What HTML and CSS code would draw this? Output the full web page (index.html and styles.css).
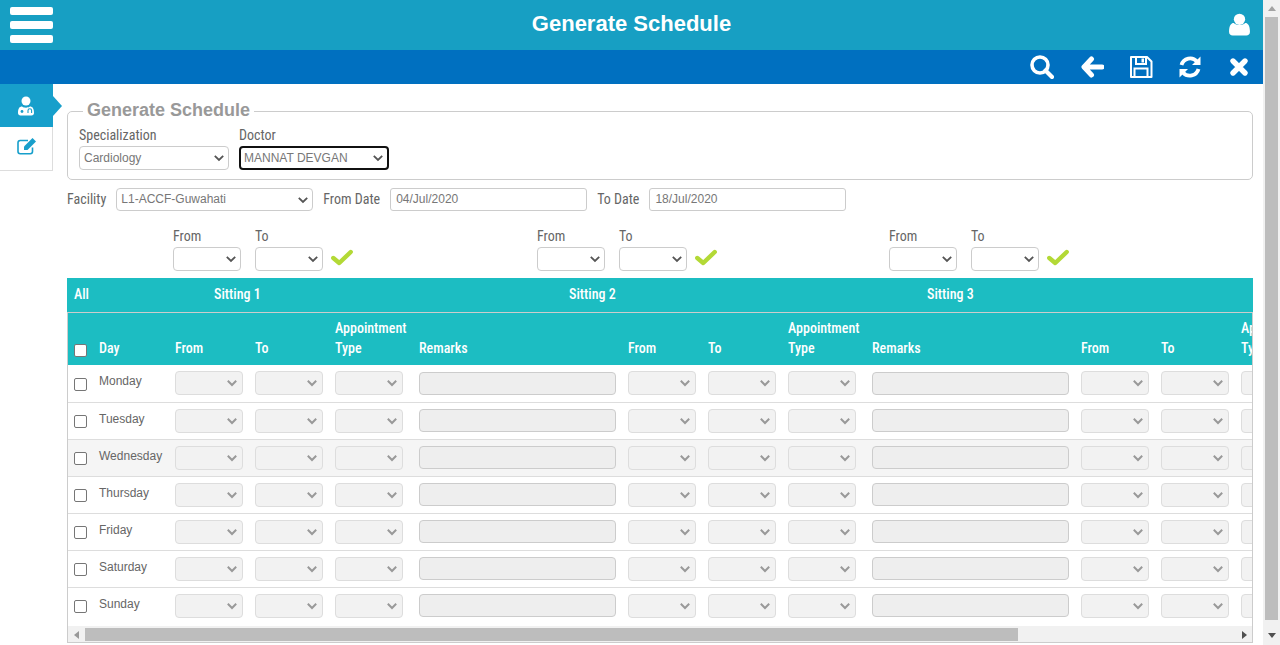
FILE: index.html
```html
<!DOCTYPE html>
<html lang="en">
<head>
<meta charset="utf-8">
<title>Generate Schedule</title>
<link rel="stylesheet" href="styles.css">
</head>
<body>
<div class="shell">
  <div class="page">
    <header class="topbar">
      <button class="burger" aria-label="Menu"><span></span><span></span><span></span></button>
      <h1 class="title">Generate Schedule</h1>
      <svg class="user" viewBox="0 0 20 22"><circle cx="10" cy="6" r="5.4" fill="#fff"/><path d="M0 18c0-6 2-8.500 4.500-8.500 1.500 1.300 3.500 2 5.500 2s4-.7 5.500-2C18 9.500 20 12 20 18c0 2.500-1.500 3.500-3.500 3.500h-13C1.500 21.500 0 20.500 0 18z" fill="#fff"/></svg>
    </header>
    <nav class="toolbar">
      <svg class="tool tool-search" viewBox="0 0 24 24"><circle cx="10" cy="10" r="8" fill="none" stroke="#fff" stroke-width="3.600"/><path d="M15.500 15.500L22 22" stroke="#fff" stroke-width="4.200" stroke-linecap="round"/></svg>
      <svg class="tool" viewBox="0 0 24 24"><path d="M11.500 4L4 12l7.500 8M5 12h17" fill="none" stroke="#fff" stroke-width="5" stroke-linecap="round" stroke-linejoin="round"/></svg>
      <svg class="tool" viewBox="0 0 24 24"><path d="M2 2h16l4.500 4.500V22H2z" fill="none" stroke="#fff" stroke-width="2" stroke-linejoin="round"/><path d="M7 2.500v6.500h10V2.500M5.500 22v-8.500h13V22" fill="none" stroke="#fff" stroke-width="2"/><rect x="12.500" y="3.500" width="2.500" height="4" fill="#fff"/></svg>
      <svg class="tool" viewBox="0 0 24 24"><path d="M3.500 10A9 9 0 0 1 19 6.500" fill="none" stroke="#fff" stroke-width="3.800"/><path d="M22.500 1.500V10h-8.500z" fill="#fff"/><path d="M20.500 14A9 9 0 0 1 5 17.500" fill="none" stroke="#fff" stroke-width="3.800"/><path d="M1.500 22.500V14H10z" fill="#fff"/></svg>
      <svg class="tool" viewBox="0 0 24 24"><path d="M6 6l12 12M18 6L6 18" stroke="#fff" stroke-width="5.400" stroke-linecap="round"/></svg>
    </nav>
    <div class="body">
      <aside class="side">
        <div class="tab tab-active">
          <svg class="tab-icon doc" viewBox="0 0 20 20"><circle cx="10" cy="5" r="4.500" fill="#fff"/><path d="M2 17c0-4.500 1.500-6.500 4-6.500 1 .8 2.500 1.200 4 1.200s3-.4 4-1.200c2.500 0 4 2 4 6.500 0 1.500-1 2.500-2.500 2.500h-11C3 19.500 2 18.500 2 17z" fill="#fff"/><circle cx="6" cy="15.500" r="1.400" fill="#179fcb"/><path d="M12 17v-2.500a1.800 1.800 0 0 1 3.600 0V17" fill="none" stroke="#179fcb" stroke-width="1.100"/></svg>
        </div>
        <div class="tab tab-edit">
          <svg class="tab-icon" viewBox="0 0 20 18"><path d="M15.500 10.500V14.500a2.200 2.200 0 0 1-2.200 2.200H3.200A2.200 2.200 0 0 1 1 14.500V5.700a2.200 2.200 0 0 1 2.200-2.200H11" fill="none" stroke="#179fcb" stroke-width="1.600"/><path d="M7 9.500L15.500 1l3.500 3.500L10.500 13H7z" fill="#179fcb"/></svg>
        </div>
      </aside>
      <main class="main">
        <fieldset class="group">
          <legend class="legend">Generate Schedule</legend>
          <div class="field">
            <label class="label">Specialization</label>
            <select class="sel sel-spec"><option>Cardiology</option></select>
          </div>
          <div class="field">
            <label class="label">Doctor</label>
            <select class="sel sel-spec sel-focus"><option>MANNAT DEVGAN</option></select>
          </div>
        </fieldset>
        <div class="filters">
          <label class="label">Facility</label>
          <select class="sel sel-fac"><option>L1-ACCF-Guwahati</option></select>
          <label class="label from-label">From Date</label>
          <input class="inp" value="04/Jul/2020">
          <label class="label to-label">To Date</label>
          <input class="inp" value="18/Jul/2020">
        </div>
        <div class="sittings">
          <div class="sit sit1">
            <div class="field"><label class="label">From</label><select class="sel sel-time"></select></div>
            <div class="field"><label class="label">To</label><select class="sel sel-time"></select></div>
            <svg class="check" viewBox="0 0 24 18"><path d="M2.500 9.500l6.500 5.500L21.500 3" fill="none" stroke="#b3d936" stroke-width="4.800" stroke-linejoin="round" stroke-linecap="round"/></svg>
          </div>
          <div class="sit sit2">
            <div class="field"><label class="label">From</label><select class="sel sel-time"></select></div>
            <div class="field"><label class="label">To</label><select class="sel sel-time"></select></div>
            <svg class="check" viewBox="0 0 24 18"><path d="M2.500 9.500l6.500 5.500L21.500 3" fill="none" stroke="#b3d936" stroke-width="4.800" stroke-linejoin="round" stroke-linecap="round"/></svg>
          </div>
          <div class="sit sit3">
            <div class="field"><label class="label">From</label><select class="sel sel-time"></select></div>
            <div class="field"><label class="label">To</label><select class="sel sel-time"></select></div>
            <svg class="check" viewBox="0 0 24 18"><path d="M2.500 9.500l6.500 5.500L21.500 3" fill="none" stroke="#b3d936" stroke-width="4.800" stroke-linejoin="round" stroke-linecap="round"/></svg>
          </div>
        </div>
        <div class="band">
          <span class="band-all">All</span>
          <span class="band-s1">Sitting 1</span>
          <span class="band-s2">Sitting 2</span>
          <span class="band-s3">Sitting 3</span>
        </div>
        <div class="gridbox">
          <div class="gridclip">
            <table class="grid" id="grid"></table>
          </div>
          <div class="hscroll">
            <span class="arrow-l"></span>
            <div class="hthumb"></div>
            <span class="arrow-r"></span>
          </div>
        </div>
      </main>
    </div>
  </div>
  <div class="vscroll">
    <span class="arrow-u"></span>
    <div class="vthumb"></div>
    <span class="arrow-d"></span>
  </div>
</div>
<script src="app.js"></script>
</body>
</html>
```
FILE: app.js
```js
const days = ["Monday","Tuesday","Wednesday","Thursday","Friday","Saturday","Sunday"];
let head = '<thead><tr><th class="c-chk"><input type="checkbox" class="chk"></th><th class="c-day">Day</th>';
for (let i = 0; i < 3; i++) {
  head += '<th class="c-t">From</th><th class="c-t">To</th><th class="c-a">Appointment Type</th><th class="c-r">Remarks</th>';
}
head += '</tr></thead><tbody>';
let rows = "";
for (const d of days) {
  rows += '<tr><td class="c-chk"><input type="checkbox" class="chk"></td><td class="c-day"><span class="dayname">' + d + '</span></td>';
  for (let i = 0; i < 3; i++) {
    rows += '<td><select class="sel sel-dis" disabled></select></td><td><select class="sel sel-dis" disabled></select></td><td><select class="sel sel-dis" disabled></select></td><td class="c-rem"><input class="inp-rem" disabled></td>';
  }
  rows += '</tr>';
}
document.getElementById("grid").innerHTML = head + rows + '</tbody>';
```
FILE: styles.css
```css
* { box-sizing: border-box; }
html, body { margin: 0; padding: 0; height: 100%; overflow: hidden; background: #fff; }
body { font-family: "Liberation Sans", Arial, sans-serif; color: #555; }
.shell { display: flex; width: 1280px; height: 645px; overflow: hidden; }
.page { width: 1263px; display: flex; flex-direction: column; }
.topbar { height: 50px; background: #179fc3; display: flex; align-items: center; justify-content: center; position: relative; flex: none; }
.burger { position: absolute; left: 10px; top: 7px; width: 43px; height: 36px; padding: 0; border: 0; background: none; display: flex; flex-direction: column; justify-content: space-between; }
.burger span { display: block; height: 8px; border-radius: 2px; background: #fff; }
.title { margin: 0; font: bold 22px "Liberation Sans", Arial, sans-serif; color: #fff; position: relative; top: -1px; }
.user { position: absolute; left: 1229px; top: 13px; width: 21px; height: 23px; }
.toolbar { height: 34px; background: #0070c0; display: flex; align-items: center; justify-content: flex-end; flex: none; padding-right: 12px; gap: 25px; }
.tool { width: 24px; height: 24px; display: block; }
.tool-search { margin-right: 1px; margin-left: -1px; }
.body { flex: 1; display: flex; min-height: 0; }
.side { width: 53px; flex: none; }
.tab { height: 44px; display: flex; align-items: center; justify-content: center; border-right: 1px solid #ddd; border-bottom: 1px solid #ddd; }
.tab-active { background: #179fcb; height: 43px; border: 0; position: relative; }
.tab-active::after { content: ""; position: absolute; left: 53px; top: 12px; border-left: 9px solid #179fcb; border-top: 10px solid transparent; border-bottom: 10px solid transparent; }
.tab-icon { width: 20px; height: 20px; }
.doc { margin-right: 2px; }
.tab-edit { padding: 0 0 6px 2px; }
.main { flex: 1; min-width: 0; padding: 0 10px 0 14px; }
.group { margin: 16px 0 0; padding: 5px 11px 0; border: 1px solid #ccc; border-radius: 5px; height: 80px; display: flex; gap: 10px; min-width: 0; }
.legend { font: bold 18px "Liberation Sans", Arial, sans-serif; color: #999; padding: 0 4px 2px; margin-left: 4px; line-height: 20px; }
.field { display: flex; flex-direction: column; }
.label { font-size: 14px; line-height: 16px; color: #666; font-stretch: condensed; font-family: "Roboto Condensed", "Liberation Sans Narrow", Roboto, sans-serif; }
.sel { appearance: none; -webkit-appearance: none; display: block; border: 1px solid #ccc; border-radius: 4px; background-color: #fff; background-image: url("data:image/svg+xml,%3Csvg xmlns='http://www.w3.org/2000/svg' width='12' height='8'%3E%3Cpath d='M1.800 1.800L6 6l4.200-4.200' fill='none' stroke='%23555' stroke-width='1.800'/%3E%3C/svg%3E"); background-repeat: no-repeat; background-position: right 3px center; font: 12px "Liberation Sans", Arial, sans-serif; color: #777; padding: 0 4px; height: 24px; margin: 0; }
.sel-spec { width: 150px; margin-top: 3px; }
.sel-focus { outline: 0; border: 2px solid #111; padding: 0 3px; }
.filters { display: flex; align-items: center; margin-top: 8px; height: 23px; }
.filters .label { margin-bottom: 2px; }
.sel-fac { width: 197px; height: 23px; margin-left: 10px; padding-bottom: 1px; }
.from-label { margin-left: 10px; }
.to-label { margin-left: 10px; }
.inp { width: 197px; height: 23px; margin-left: 10px; border: 1px solid #ccc; border-radius: 3px; padding: 0 5px 1px; font: 12px "Liberation Sans", Arial, sans-serif; color: #777; }
.sittings { display: flex; height: 44px; margin-top: 16px; }
.sit { display: flex; gap: 14px; align-items: flex-end; position: relative; }
.sit1 { margin-left: 106px; }
.sit2 { margin-left: 184px; }
.sit3 { margin-left: 172px; }
.sel-time { width: 68px; margin-top: 3px; height: 24px; }
.check { width: 22px; height: 17px; margin: 0 0 5px -6px; }
.band { height: 34px; margin-top: 7px; background: #1cbdc2; color: #fff; font-size: 14px; font-weight: 500; font-family: "Roboto Condensed", "Liberation Sans Narrow", Roboto, sans-serif; position: relative; }
.band span { position: absolute; top: 8px; line-height: 16px; }
.band-all { left: 7px; }
.band-s1 { left: 147px; }
.band-s2 { left: 502px; }
.band-s3 { left: 860px; }
.gridbox { border: 1px solid #ccc; height: 331px; width: 1186px; overflow: hidden; }
.gridclip { height: 313px; overflow: hidden; }
.grid { border-collapse: collapse; table-layout: fixed; width: 1460px; }
.grid th { background: #1cbdc2; color: #fff; height: 52px; text-align: left; vertical-align: bottom; padding: 0 6px 7px; font-size: 14px; line-height: 20px; font-weight: 500; font-family: "Roboto Condensed", "Liberation Sans Narrow", Roboto, sans-serif; }
.grid td { height: 37px; padding: 0 6px; border-bottom: 1px solid #ddd; vertical-align: middle; }
.grid tbody tr:nth-child(3) td { background: #f5f5f5; }
.grid tbody tr:last-child td { border-bottom: 0; }
.grid .c-chk { width: 25px; padding: 0 0 0 6px; }
.grid th.c-chk { padding-bottom: 8px; }
.grid .c-day { width: 76px; }
.grid .c-t { width: 80px; }
.grid .c-a { width: 84px; }
.grid .c-r { width: 209px; }
.chk { appearance: none; -webkit-appearance: none; width: 13px; height: 13px; margin: 0; display: block; border: 1px solid #767676; border-radius: 2px; background: #fff; position: relative; top: 1px; }
th .chk { top: 0; }
.dayname { font-size: 12px; color: #666; position: relative; top: -3px; }
.sel-dis { width: 68px; background-color: #f2f2f2; border-color: #ddd; opacity: 1; background-position: right 4px center; background-image: url("data:image/svg+xml,%3Csvg xmlns='http://www.w3.org/2000/svg' width='12' height='8'%3E%3Cpath d='M1.800 1.800L6 6l4.200-4.200' fill='none' stroke='%23999' stroke-width='2'/%3E%3C/svg%3E"); }
.inp-rem { width: 197px; height: 23px; display: block; background: #eee; border: 1px solid #ccc; border-radius: 4px; }
.hscroll { height: 17px; background: #f1f1f1; display: flex; align-items: center; }
.hthumb { width: 933px; height: 13px; background: #bdbdbd; }
.arrow-l { width: 17px; flex: none; display: flex; justify-content: center; }
.arrow-l::before { content: ""; border-right: 5px solid #999; border-top: 4px solid transparent; border-bottom: 4px solid transparent; }
.arrow-r { margin-left: auto; width: 16px; display: flex; justify-content: center; }
.arrow-r::before { content: ""; border-left: 5px solid #505050; border-top: 4px solid transparent; border-bottom: 4px solid transparent; }
.vscroll { width: 17px; height: 645px; flex: none; background: #f1f1f1; display: flex; flex-direction: column; align-items: center; }
.vthumb { width: 13px; height: 603px; background: #bdbdbd; }
.arrow-u { height: 17px; flex: none; display: flex; align-items: center; }
.arrow-u::before { content: ""; border-bottom: 5px solid #a3a3a3; border-left: 4px solid transparent; border-right: 4px solid transparent; }
.arrow-d { height: 25px; padding-top: 5px; flex: none; display: flex; align-items: center; }
.arrow-d::before { content: ""; border-top: 5px solid #505050; border-left: 4px solid transparent; border-right: 4px solid transparent; }
```
